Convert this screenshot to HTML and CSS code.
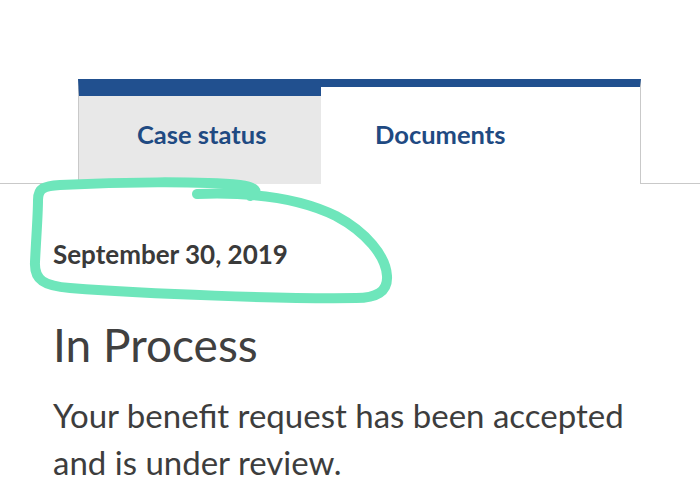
FILE: index.html
```html
<!DOCTYPE html>
<html lang="en">
<head>
  <meta charset="utf-8" />
  <title>Case status</title>
  <link rel="stylesheet" href="styles.css">
</head>
<body>
  <div id="page">

    <div class="tabs">
      <div class="tab tab-case">Case status</div>
      <div class="tab tab-docs">Documents</div>
    </div>

    <div class="status">
      <div class="date">September 30, 2019</div>
      <h1>In Process</h1>
      <p>Your benefit request has been accepted and is under review.</p>
    </div>

    <svg class="mark" width="700" height="502" viewBox="0 0 700 502">
      <path d="M197 194 C250 192 300 198 336 216 C366 232 386 256 387 276 C388 292 376 298 356 298 C280 299 150 294 70 288 C44 286 34 280 35 262 C36 240 38 215 38 200 C38 188 44 186 60 185 C120 182 200 181 240 185 C256 187 260 192 250 196" />
    </svg>

  </div>
</body>
</html>
```

FILE: styles.css
```css
html, body { margin: 0; padding: 0; background: #fff; font-family: Lato, "Open Sans", sans-serif; color: #3b3b3b; }
#page { width: 700px; height: 502px; position: relative; overflow: hidden; }

.tabs { display: flex; padding: 79px 0 0 78px; border-bottom: 1px solid #c9c9c9; }
.tab { box-sizing: border-box; height: 105px; margin-bottom: -1px; padding-left: 58px; font-size: 25.5px; font-weight: 700; line-height: 32px; color: #1f4a82; }
.tab-case { width: 243px; background: #e8e8e8; border-top: 17px solid #21508f; border-left: 1px solid #c9c9c9; padding-top: 22px; }
.tab-docs { width: 320px; background: #fff; border-top: 8px solid #21508f; border-right: 1px solid #c9c9c9; padding-top: 31px; padding-left: 54px; }

.status { padding: 0 53px; }
.date { margin-top: 54px; font-size: 26px; font-weight: 700; line-height: 32px; color: #3a3a3a; }
h1 { margin: 49px 0 0; font-size: 46px; font-weight: 400; line-height: 52px; color: #404040; }
p { margin: 21px 0 0; font-size: 33px; line-height: 47px; color: #3d3d3d; }

.mark { position: absolute; left: 0; top: 0; pointer-events: none; }
.mark path { fill: none; stroke: #6ee6bb; stroke-width: 10; stroke-linecap: round; stroke-linejoin: round; }
```
